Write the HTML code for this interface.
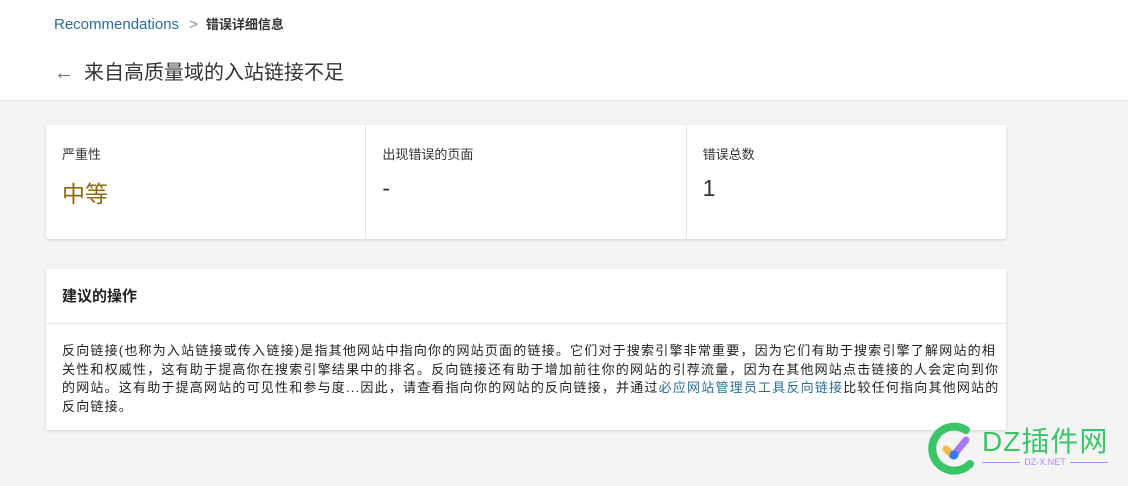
<!DOCTYPE html>
<html><head><meta charset="utf-8"><style>
*{margin:0;padding:0;box-sizing:border-box}
body{width:1128px;height:486px;overflow:hidden;background:#f4f4f4;font-family:"Liberation Sans","Noto Sans CJK SC",sans-serif;color:#222;position:relative}
.hdr{position:absolute;left:0;top:0;width:1128px;height:101px;background:#fff;border-bottom:1px solid #e3e3e3}
.bc{position:absolute;left:54px;top:14px;font-size:15px;color:#2a6f97}
.bc b{color:#333;font-size:13px;margin-left:8px}
.bc .sep{color:#888;margin-left:10px;font-weight:300}
.title{position:absolute;left:54px;top:56px;font-size:20px;color:#333}
.title span{color:#666;margin-right:10px;font-weight:300}
.card{position:absolute;background:#fff;box-shadow:0 1px 3px rgba(0,0,0,.15);border-radius:2px}
.c1{left:46px;top:125px;width:960px;height:114px;display:flex}
.col{flex:1;padding:19px 16px;border-right:1px solid #e6e6e6}
.col:last-child{border-right:none}
.lbl{font-size:13px;color:#333}
.val{font-size:23px;margin-top:12px;color:#333}
.c2{left:46px;top:269px;width:960px;height:161px}
.c2 h3{font-size:15px;font-weight:bold;height:55px;line-height:55px;padding-left:16px;border-bottom:1px solid #e6e6e6}
.c2 p{font-size:13px;line-height:18.7px;padding:18px 0 0 16px;color:#222;letter-spacing:1.2px}
.c2 a{color:#2a6f97;text-decoration:none}
</style></head><body>
<div class="hdr">
<div class="bc">Recommendations<span class="sep">&gt;</span><b>错误详细信息</b></div>
<div class="title"><span>←</span>来自高质量域的入站链接不足</div>
</div>
<div class="card c1">
<div class="col"><div class="lbl">严重性</div><div class="val" style="color:#8a6a14">中等</div></div>
<div class="col"><div class="lbl">出现错误的页面</div><div class="val">-</div></div>
<div class="col"><div class="lbl">错误总数</div><div class="val">1</div></div>
</div>
<div class="card c2">
<h3>建议的操作</h3>
<p>反向链接(也称为入站链接或传入链接)是指其他网站中指向你的网站页面的链接。它们对于搜索引擎非常重要，因为它们有助于搜索引擎了解网站的相关性和权威性，这有助于提高你在搜索引擎结果中的排名。反向链接还有助于增加前往你的网站的引荐流量，因为在其他网站点击链接的人会定向到你的网站。这有助于提高网站的可见性和参与度...因此，请查看指向你的网站的反向链接，并通过<a>必应网站管理员工具反向链接</a>比较任何指向其他网站的反向链接。</p>
</div>
<svg style="position:absolute;left:926px;top:420px" width="56" height="56" viewBox="0 0 56 56">
<path d="M40 10 A22 22 0 1 0 44 44" fill="none" stroke="#3cc468" stroke-width="8" stroke-linecap="round"/>
<path d="M20 29 L27 36" stroke="#f5b64a" stroke-width="7" stroke-linecap="round"/>
<path d="M27 36 L40 20" stroke="#a77cf6" stroke-width="7" stroke-linecap="round"/>
<circle cx="28" cy="35" r="4.5" fill="#2f7cf6"/>
</svg>
<div style="position:absolute;left:982px;top:420px;font-size:28px;color:#3cc468;letter-spacing:1px">DZ插件网</div>
<div style="position:absolute;left:982px;top:456px;width:126px;height:12px;font-size:9px;color:#a98cf0;text-align:center;line-height:12px">
<span style="position:absolute;left:0;top:6px;width:38px;border-top:1px solid #a98cf0"></span>DZ-X.NET<span style="position:absolute;right:0;top:6px;width:38px;border-top:1px solid #a98cf0"></span></div>
</body></html>
